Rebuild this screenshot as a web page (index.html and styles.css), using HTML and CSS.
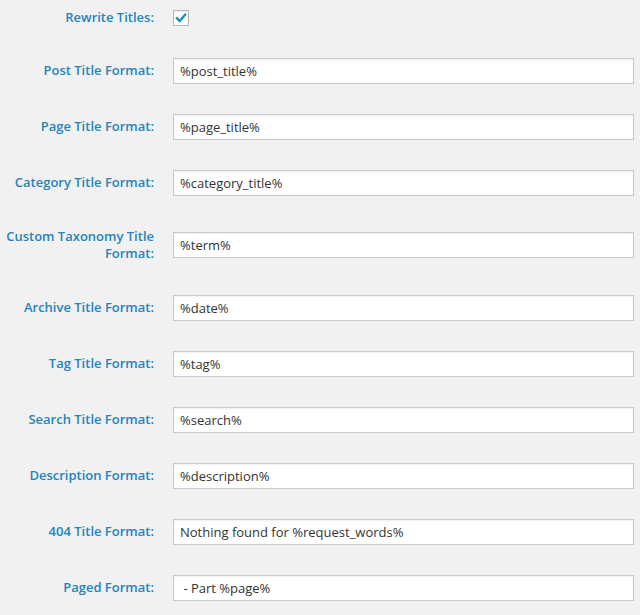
FILE: index.html
```html
<!DOCTYPE html>
<html>
<head>
<meta charset="utf-8">
<link rel="stylesheet" href="styles.css">
</head>
<body>
<div class="form">
  <div class="row row-check">
    <label class="lbl">Rewrite Titles:</label>
    <div class="field">
      <span class="checkbox"><svg width="14" height="14" viewBox="0 0 14 14"><path d="M3 7.2 L5.8 10 L11.2 3.6" fill="none" stroke="#1e8cbe" stroke-width="2.4" stroke-linecap="square"/></svg></span>
    </div>
  </div>
  <div class="row"><label class="lbl">Post Title Format:</label><div class="field"><input class="txt" type="text" value="%post_title%"></div></div>
  <div class="row"><label class="lbl">Page Title Format:</label><div class="field"><input class="txt" type="text" value="%page_title%"></div></div>
  <div class="row"><label class="lbl">Category Title Format:</label><div class="field"><input class="txt" type="text" value="%category_title%"></div></div>
  <div class="row"><label class="lbl">Custom Taxonomy Title Format:</label><div class="field"><input class="txt" type="text" value="%term%"></div></div>
  <div class="row"><label class="lbl">Archive Title Format:</label><div class="field"><input class="txt" type="text" value="%date%"></div></div>
  <div class="row"><label class="lbl">Tag Title Format:</label><div class="field"><input class="txt" type="text" value="%tag%"></div></div>
  <div class="row"><label class="lbl">Search Title Format:</label><div class="field"><input class="txt" type="text" value="%search%"></div></div>
  <div class="row"><label class="lbl">Description Format:</label><div class="field"><input class="txt" type="text" value="%description%"></div></div>
  <div class="row"><label class="lbl">404 Title Format:</label><div class="field"><input class="txt" type="text" value="Nothing found for %request_words%"></div></div>
  <div class="row"><label class="lbl">Paged Format:</label><div class="field"><input class="txt" type="text" value=" - Part %page%"></div></div>
</div>
</body>
</html>
```
FILE: styles.css
```css
html, body {
  margin: 0;
  padding: 0;
  background: #f1f1f1;
  height: 100%;
  overflow: hidden;
}
.form {
  display: flex;
  flex-direction: column;
  width: 640px;
  font-family: "Open Sans", "Liberation Sans", sans-serif;
}
.row {
  display: flex;
  align-items: center;
}
.row-check {
  padding: 9px 0 16px;
}
.lbl {
  width: 154px;
  flex: none;
  text-align: right;
  color: #2584b8;
  font-weight: 600;
  font-size: 13px;
  line-height: 17.5px;
  padding: 17px 0;
}
.row-check .lbl {
  padding: 0;
}
.field {
  margin-left: 19px;
  padding: 15px 0;
  flex: none;
  width: 461px;
  display: flex;
}
.row-check .field {
  padding: 0;
}
.checkbox {
  width: 16px;
  height: 16px;
  box-sizing: border-box;
  border: 1px solid #b4b9be;
  background: #fff;
  box-shadow: inset 0 1px 2px rgba(0,0,0,0.1);
  display: flex;
  align-items: center;
  justify-content: center;
}
.txt {
  box-sizing: border-box;
  width: 461px;
  height: 26px;
  margin: 0;
  border: 1px solid #c9c9c9;
  box-shadow: inset 0 1px 2px rgba(0,0,0,0.07);
  background: #fff;
  padding: 0 6px;
  font-family: "Open Sans", "Liberation Sans", sans-serif;
  font-size: 13px;
  color: #333;
  outline: none;
}
```
